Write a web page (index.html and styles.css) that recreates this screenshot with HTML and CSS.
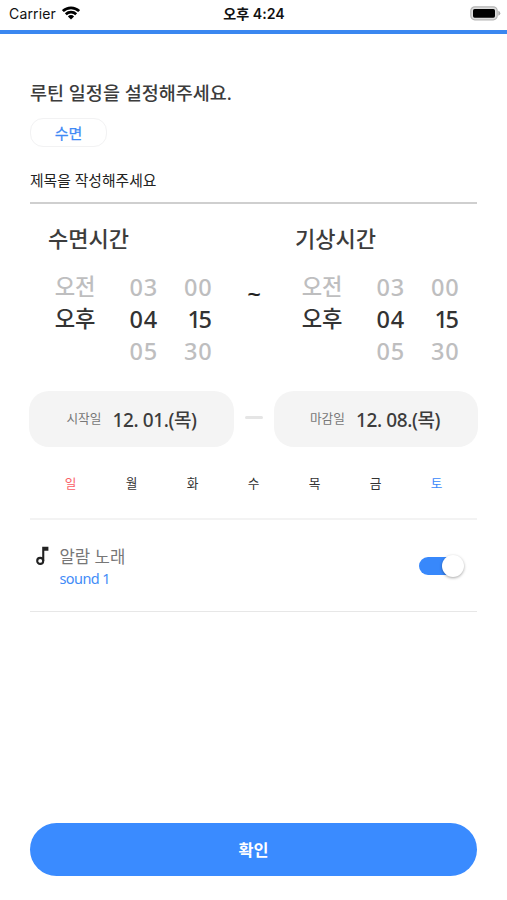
FILE: index.html
```html
<!DOCTYPE html>
<html lang="ko">
<head>
<meta charset="utf-8">
<meta name="viewport" content="width=device-width, initial-scale=1">
<title>루틴 일정</title>
<link rel="stylesheet" href="styles.css">
</head>
<body>
<header class="status">
  <div class="carrier"><span>Carrier</span>
    <svg class="wifi" width="18" height="14" viewBox="0 0 18 14"><g fill="none" stroke="#000" stroke-width="2.7"><path d="M.9 5.1a11.6 11.6 0 0 1 16.2 0"/><path d="M3.8 8.3a7.5 7.5 0 0 1 10.4 0"/></g><path d="M9 13.6 5.9 10.4a4.4 4.4 0 0 1 6.2 0z"/></svg>
  </div>
  <div class="clock">오후 4:24</div>
  <svg class="battery" width="31" height="15" viewBox="0 0 31 15"><rect x=".8" y=".8" width="26.4" height="13" rx="4" fill="#ddd" stroke="#b5b5b5" stroke-width="1.2"/><rect x="3" y="3" width="22" height="8.7" rx="1.6"/><path d="M28.3 4.8q2 .8 2 2.5t-2 2.5z" fill="#aaa"/></svg>
</header>
<main class="page">
  <h1 class="title">루틴 일정을 설정해주세요.</h1>
  <div class="chip">수면</div>
  <div class="name-field">제목을 작성해주세요</div>
  <section class="times">
    <div class="picker">
      <h2>수면시간</h2>
      <div class="wheel">
        <span>오전</span><span class="num">03</span><span class="num">00</span>
        <b>오후</b><b class="num">04</b><b class="num narrow">15</b>
        <span></span><span class="num">05</span><span class="num">30</span>
      </div>
    </div>
    <div class="tilde">~</div>
    <div class="picker">
      <h2>기상시간</h2>
      <div class="wheel">
        <span>오전</span><span class="num">03</span><span class="num">00</span>
        <b>오후</b><b class="num">04</b><b class="num narrow">15</b>
        <span></span><span class="num">05</span><span class="num">30</span>
      </div>
    </div>
  </section>
  <section class="dates">
    <div class="date start"><span class="label">시작일</span><span class="value">12. 01.(목)</span></div>
    <i class="dash"></i>
    <div class="date end"><span class="label">마감일</span><span class="value">12. 08.(목)</span></div>
  </section>
  <section class="week">
    <span class="sun">일</span><span>월</span><span>화</span><span>수</span><span>목</span><span>금</span><span class="sat">토</span>
  </section>
  <section class="alarm">
    <svg class="note" width="14" height="20" viewBox="0 0 14 20"><circle cx="4.2" cy="14.9" r="3" fill="none" stroke="#222" stroke-width="2.1"/><path d="M6.2 .8H12.4V4.7H8.3V14.9H6.2z" fill="#222"/></svg>
    <div class="song"><div class="song-title">알람 노래</div><div class="song-name">sound 1</div></div>
    <div class="toggle"><i class="knob"></i></div>
  </section>
  <button class="confirm">확인</button>
</main>
</body>
</html>
```
FILE: styles.css
```css
* { box-sizing: border-box; }
body {
  margin: 0;
  height: 900px;
  display: flex;
  flex-direction: column;
  background: #fff;
  color: #3c3c3c;
  font-family: "Noto Sans", "Noto Sans CJK KR", sans-serif;
  overflow: hidden;
}
h1, h2 { margin: 0; font-weight: 500; }
.status {
  height: 34px;
  padding: 0 6px 5px 9px;
  border-bottom: 4px solid #3a87f0;
  display: grid;
  grid-template-columns: 1fr auto 1fr;
  align-items: center;
  line-height: 23px;
  color: #111;
  font-family: Inter, "Noto Sans CJK KR", sans-serif;
}
.carrier { display: flex; gap: 6px; align-items: center; font-size: 14px; letter-spacing: .15px; padding-top: 1px; }
.wifi { margin-top: -1px; }
.clock { font-size: 14.1px; font-weight: 600; padding-top: 1px; margin-left: -2px; }
.battery { justify-self: end; margin-top: 2px; }
.page { flex: 1; padding: 44px 30px 24px; display: flex; flex-direction: column; }
.title { height: 30px; line-height: 30px; font-size: 18.5px; }
.chip {
  width: 77px;
  height: 29px;
  margin-top: 10px;
  border: 1.5px solid #f2f2f3;
  border-radius: 13px;
  font-size: 15px;
  line-height: 28px;
  font-weight: 400;
  text-align: center;
  color: #3f8af5;
  -webkit-text-stroke: .25px #3f8af5;
}
.name-field {
  height: 57px;
  padding-top: 23px;
  border-bottom: 2px solid #cfcfcf;
  font-size: 14.8px;
  line-height: 20px;
  color: #222;
}
.times { height: 187px; padding: 19px 17px 0 18px; display: flex; justify-content: space-between; }
.picker { width: 165px; }
.picker h2 { font-size: 22px; line-height: 30px; }
.wheel {
  margin-top: 18px;
  padding-left: 6px;
  display: grid;
  grid-template-columns: 41.5px 62.5px 54.5px;
  grid-auto-rows: 32px;
  line-height: 32px;
  font-size: 22.2px;
  color: #bebebf;
  font-weight: 500;
  text-align: right;
}
.wheel b { font-weight: 500; color: #333; }
.num { font-size: 23.5px; letter-spacing: .8px; }
.wheel .narrow { letter-spacing: -2.5px; padding-right: 3px; }
.tilde { padding-top: 56px; font-size: 24px; line-height: 30px; font-weight: 500; color: #222; }
.dates { height: 56px; display: flex; align-items: center; justify-content: space-between; margin: 0 -1px; }
.date { height: 56px; border-radius: 20px; background: #f4f4f4; display: flex; align-items: center; justify-content: center; gap: 11px; white-space: nowrap; }
.start { width: 205px; }
.end { width: 204px; padding-right: 2px; }
.dash { width: 18px; height: 3px; margin-bottom: 3px; border-radius: 2px; background: #e5e5e5; }
.label { font-size: 12.7px; color: #777; margin-top: -3px; }
.value { font-size: 19px; font-weight: 500; letter-spacing: -.4px; margin-top: -1px; }
.week { height: 73px; padding: 0 10px; display: grid; grid-template-columns: repeat(7, 61px); border-bottom: 2px solid #f3f3f3; text-align: center; font-size: 12.7px; line-height: 73px; color: #333; }
.sun { color: #fa5e66; }
.sat { color: #3a88fa; }
.alarm { height: 92px; display: flex; border-bottom: 1px solid #e7e7e7; }
.note { margin: 26px 10px 0 5.5px; }
.song { flex: 1; padding-top: 25px; }
.song-title { font-size: 16.7px; line-height: 24px; color: #777; }
.song-name { font-size: 14.5px; line-height: 18px; letter-spacing: -.6px; color: #438cf7; }
.toggle { width: 45px; height: 18px; margin: 37px 13px 0 0; display: flex; align-items: center; justify-content: flex-end; border-radius: 9px; background: linear-gradient(#3888fb, #3888fb) 0 0 / 36px 18px no-repeat; }
.knob { width: 22px; height: 22px; flex: none; border-radius: 50%; background: #fff; box-shadow: 0 1px 3px rgba(0, 0, 0, .35); }
.confirm { height: 53px; margin-top: auto; border: 0; border-radius: 27px; background: #3a8bff; color: #fff; font: 700 16.3px/53px "Noto Sans CJK KR", sans-serif; padding: 0; }
```
